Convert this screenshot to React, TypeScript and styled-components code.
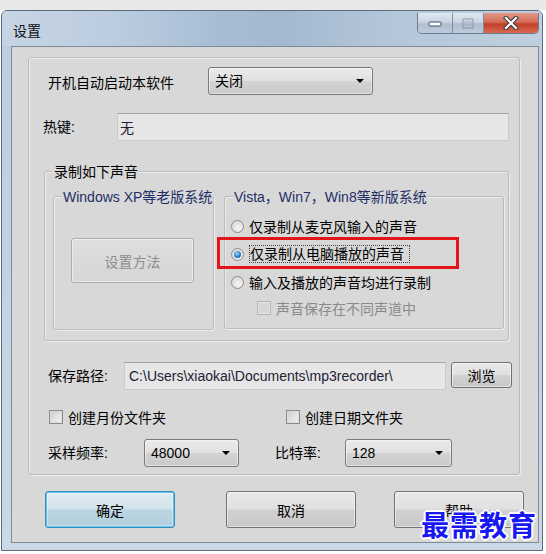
import styled, { createGlobalStyle } from "styled-components";

const GlobalStyle = createGlobalStyle`
  html, body {
    margin: 0;
    padding: 0;
    background: #fff;
  }
  body {
    font-family: "Liberation Sans", "Noto Sans CJK SC", sans-serif;
    font-size: 14px;
    color: #000;
  }
`;

const Screen = styled.div`
  position: relative;
  width: 546px;
  height: 554px;
  background: #fff;
  display: flex;
  flex-direction: column;
  overflow: hidden;
`;

const TopStrip = styled.div`
  flex: none;
  height: 10px;
  background: #e8e8e8;
`;

const Window = styled.div`
  flex: none;
  margin-left: 1px;
  width: 542px;
  height: 541px;
  box-sizing: border-box;
  border: 1px solid #5b6b7d;
  border-radius: 6px 6px 0 0;
  background: linear-gradient(180deg, #bccde0 0%, #c5d4e4 60%, #cbd8e6 100%);
  display: flex;
  flex-direction: column;
  overflow: hidden;
`;

const TitleBar = styled.div`
  flex: none;
  height: 35px;
  display: flex;
  align-items: flex-start;
  padding-left: 11px;
  background: linear-gradient(
    90deg,
    #c6d5e4 0%,
    #bccde0 20%,
    #a8bdd4 40%,
    #a4b9d0 52%,
    #b4c6d9 72%,
    #bfcfdf 100%
  );
`;

const Title = styled.span`
  margin-top: 12px;
  line-height: 16px;
  color: #111;
`;

const CaptionButtons = styled.div`
  margin-left: auto;
  margin-right: 3px;
  margin-top: 2px;
  display: flex;
  height: 20px;
  border: 1px solid #6b7a8c;
  border-top: none;
  border-radius: 0 0 5px 5px;
  overflow: hidden;
`;

const CaptionButton = styled.div<{ $w: number; $close?: boolean }>`
  width: ${(p) => p.$w}px;
  height: 20px;
  display: flex;
  align-items: center;
  justify-content: center;
  border-left: 1px solid #7f8fa2;
  box-sizing: border-box;
  background: ${(p) =>
    p.$close
      ? "linear-gradient(180deg, #e3998a 0%, #d56c56 45%, #c2402a 55%, #d66a4f 100%)"
      : "linear-gradient(180deg, #dfe7f0 0%, #c9d5e2 45%, #aebfd2 55%, #bccbdb 100%)"};
  &:first-child {
    border-left: none;
  }
`;

const Client = styled.div`
  flex: 1;
  margin: 0 3px 7px 9px;
  box-sizing: border-box;
  border: 1px solid #7f8b98;
  background: #d8d8d8;
  display: flex;
  flex-direction: column;
`;

const Panel = styled.div`
  flex: none;
  margin: 10px 0 0 16px;
  width: 492px;
  height: 418px;
  box-sizing: border-box;
  border: 1px solid #bcbcbc;
  border-radius: 3px;
  box-shadow: inset 1px 1px 0 #ececec, 1px 1px 0 #ececec;
  display: flex;
  flex-direction: column;
`;

const Row = styled.div<{ $top: number; $left: number; $h?: number }>`
  flex: none;
  display: flex;
  align-items: center;
  height: ${(p) => p.$h ?? 28}px;
  margin-top: ${(p) => p.$top}px;
  padding-left: ${(p) => p.$left}px;
`;

const Label = styled.span<{ $w: number; $dy?: number }>`
  flex: none;
  width: ${(p) => p.$w}px;
  white-space: nowrap;
  line-height: 16px;
  margin-top: ${(p) => p.$dy ?? 0}px;
`;

const Select = styled.div<{ $w: number }>`
  flex: none;
  width: ${(p) => p.$w}px;
  height: 28px;
  box-sizing: border-box;
  border: 1px solid #7a7a7a;
  border-radius: 3px;
  background: linear-gradient(180deg, #ebebeb 0%, #e1e1e1 48%, #d3d3d3 52%, #cacaca 100%);
  box-shadow: inset 0 0 0 1px rgba(255, 255, 255, 0.45);
  display: flex;
  align-items: center;
  padding: 0 8px 0 6px;
`;

const SelectValue = styled.span`
  flex: 1;
  line-height: 16px;
`;

const Arrow = styled.span`
  width: 0;
  height: 0;
  border-left: 4px solid transparent;
  border-right: 4px solid transparent;
  border-top: 4px solid #000;
`;

const TextField = styled.div<{ $w: number; $pad: number }>`
  flex: none;
  width: ${(p) => p.$w}px;
  height: 28px;
  box-sizing: border-box;
  border: 1px solid #cacaca;
  border-top-color: #a3a3a3;
  background: #e6e6e6;
  display: flex;
  align-items: center;
  padding-left: ${(p) => p.$pad}px;
  white-space: nowrap;
  color: #1d2233;
`;

const Group = styled.div<{ $w: number; $h: number; $top?: number; $left?: number }>`
  position: relative;
  flex: none;
  box-sizing: border-box;
  width: ${(p) => p.$w}px;
  height: ${(p) => p.$h}px;
  margin-top: ${(p) => p.$top ?? 0}px;
  margin-left: ${(p) => p.$left ?? 0}px;
  border: 1px solid #bcbcbc;
  border-radius: 3px;
  box-shadow: inset 1px 1px 0 #ececec, 1px 1px 0 #ececec;
`;

const GroupTitle = styled.span<{ $color?: string }>`
  position: absolute;
  top: -8px;
  left: 8px;
  padding: 0 1px;
  background: #d8d8d8;
  line-height: 16px;
  white-space: nowrap;
  color: ${(p) => p.$color ?? "#000"};
`;

const OuterBody = styled.div`
  display: flex;
  align-items: flex-start;
  gap: 10px;
  padding: 24px 0 0 8px;
`;

const LegacyBody = styled.div`
  padding: 41px 0 0 17px;
`;

const ModernBody = styled.div`
  display: flex;
  flex-direction: column;
  padding: 15px 0 0 6px;
`;

const OptionRow = styled.div<{ $h: number; $indent?: number; $disabled?: boolean }>`
  display: flex;
  align-items: center;
  gap: 5px;
  height: ${(p) => p.$h}px;
  padding-left: ${(p) => p.$indent ?? 0}px;
  white-space: nowrap;
  color: ${(p) => (p.$disabled ? "#8a8a8a" : "#000")};
`;

const Radio = styled.span<{ $checked?: boolean }>`
  flex: none;
  position: relative;
  width: 13px;
  height: 13px;
  box-sizing: border-box;
  border-radius: 50%;
  border: 1px solid #8c8c8c;
  background: radial-gradient(circle at 60% 65%, #f4f4f4 0%, #dcdcdc 70%, #cbcbcb 100%);
  &::after {
    content: "";
    display: ${(p) => (p.$checked ? "block" : "none")};
    position: absolute;
    left: 2px;
    top: 2px;
    width: 7px;
    height: 7px;
    border-radius: 50%;
    background: radial-gradient(circle at 40% 35%, #9fd9f7 0%, #2b7fc0 55%, #15457a 100%);
  }
`;

const CheckBox = styled.span<{ $disabled?: boolean }>`
  flex: none;
  width: 14px;
  height: 14px;
  box-sizing: border-box;
  border: 1px solid ${(p) => (p.$disabled ? "#b5b5b5" : "#8c8c8c")};
  background: ${(p) =>
    p.$disabled
      ? "#d6d6d6"
      : "linear-gradient(135deg, #c9c9c9 0%, #e6e6e6 60%, #f0f0f0 100%)"};
  box-shadow: inset 0 0 0 1px ${(p) => (p.$disabled ? "#e2e2e2" : "#dcdcdc")};
`;

const FocusText = styled.span`
  border: 1px dotted #444;
  padding: 0 5px 0 0;
  line-height: 16px;
`;

const Highlight = styled.div`
  position: absolute;
  left: 172px;
  top: 65px;
  width: 242px;
  height: 32px;
  box-sizing: border-box;
  border: 3px solid #e3151a;
  pointer-events: none;
`;

const Button = styled.div<{ $w: number; $h: number; $primary?: boolean; $disabled?: boolean; $left?: number }>`
  flex: none;
  width: ${(p) => p.$w}px;
  height: ${(p) => p.$h}px;
  margin-left: ${(p) => p.$left ?? 0}px;
  box-sizing: border-box;
  border-radius: 3px;
  display: flex;
  align-items: center;
  justify-content: center;
  border: 1px solid ${(p) => (p.$primary ? "#3d8bb8" : p.$disabled ? "#adadad" : "#707070")};
  color: ${(p) => (p.$disabled ? "#8d8d8d" : "#000")};
  background: ${(p) =>
    p.$primary
      ? "linear-gradient(180deg, #e1ebf1 0%, #d3e2ea 48%, #bcd5e2 52%, #b2cfdd 100%)"
      : p.$disabled
      ? "linear-gradient(180deg, #dedede 0%, #d6d6d6 100%)"
      : "linear-gradient(180deg, #e9e9e9 0%, #e0e0e0 48%, #d1d1d1 52%, #c8c8c8 100%)"};
  box-shadow: ${(p) =>
    p.$primary
      ? "inset 0 0 0 1px #58c6ee, inset 0 0 0 2px rgba(255,255,255,0.35)"
      : "inset 0 0 0 1px rgba(255,255,255,0.5)"};
`;

const ButtonBar = styled.div`
  flex: none;
  display: flex;
  height: 37px;
  margin-top: 16px;
  padding-left: 33px;
`;

const Watermark = styled.div`
  position: absolute;
  left: 421px;
  top: 507px;
  font-family: "Noto Sans CJK SC", sans-serif;
  font-size: 28px;
  font-weight: 700;
  line-height: 34px;
  letter-spacing: 1px;
  color: #1818f0;
  text-shadow: -2px 0 0 #fff, 2px 0 0 #fff, 0 -2px 0 #fff, 0 2px 0 #fff,
    -1px -1px 0 #fff, 1px 1px 0 #fff, -1px 1px 0 #fff, 1px -1px 0 #fff;
`;

const MinIcon = () => (
  <svg width="14" height="8" viewBox="0 0 14 8">
    <rect x="1" y="3" width="12" height="4" rx="1" fill="#fff" stroke="#3e4d5e" />
  </svg>
);

const MaxIcon = () => (
  <svg width="12" height="11" viewBox="0 0 12 11">
    <rect x="1" y="1" width="10" height="9" fill="none" stroke="#8797aa" />
    <rect x="3" y="4" width="6" height="3" fill="none" stroke="#a3b1c1" />
  </svg>
);

const CloseIcon = () => (
  <svg width="16" height="14" viewBox="0 0 16 14">
    <path d="M3 2 L13 12 M13 2 L3 12" stroke="#3b3b3b" strokeWidth="4.4" strokeLinecap="square" />
    <path d="M3 2 L13 12 M13 2 L3 12" stroke="#fff" strokeWidth="2.2" strokeLinecap="square" />
  </svg>
);

const App = () => {
  return (
    <Screen>
      <GlobalStyle />
      <TopStrip />
      <Window>
        <TitleBar>
          <Title>设置</Title>
          <CaptionButtons>
            <CaptionButton $w={34}>
              <MinIcon />
            </CaptionButton>
            <CaptionButton $w={31}>
              <MaxIcon />
            </CaptionButton>
            <CaptionButton $w={55} $close>
              <CloseIcon />
            </CaptionButton>
          </CaptionButtons>
        </TitleBar>
        <Client>
          <Panel>
            <Row $top={9} $left={19}>
              <Label $w={160} $dy={4}>
                开机自动启动本软件
              </Label>
              <Select $w={165}>
                <SelectValue>关闭</SelectValue>
                <Arrow />
              </Select>
            </Row>
            <Row $top={18} $left={14}>
              <Label $w={74}>热键:</Label>
              <TextField $w={392} $pad={2}>
                无
              </TextField>
            </Row>
            <Group $w={465} $h={170} $top={30} $left={15}>
              <GroupTitle>录制如下声音</GroupTitle>
              <OuterBody>
                <Group $w={161} $h={134}>
                  <GroupTitle $color="#1f2f66">Windows XP等老版系统</GroupTitle>
                  <LegacyBody>
                    <Button $w={123} $h={45} $disabled>
                      设置方法
                    </Button>
                  </LegacyBody>
                </Group>
                <Group $w={280} $h={133}>
                  <GroupTitle $color="#1f2f66">Vista，Win7，Win8等新版系统</GroupTitle>
                  <ModernBody>
                    <OptionRow $h={28}>
                      <Radio />
                      仅录制从麦克风输入的声音
                    </OptionRow>
                    <OptionRow $h={28}>
                      <Radio $checked />
                      <FocusText>仅录制从电脑播放的声音</FocusText>
                    </OptionRow>
                    <OptionRow $h={28}>
                      <Radio />
                      输入及播放的声音均进行录制
                    </OptionRow>
                    <OptionRow $h={24} $indent={26} $disabled>
                      <CheckBox $disabled />
                      声音保存在不同声道中
                    </OptionRow>
                  </ModernBody>
                </Group>
              </OuterBody>
              <Highlight />
            </Group>
            <Row $top={21} $left={19}>
              <Label $w={76}>保存路径:</Label>
              <TextField $w={322} $pad={4}>
                C:\Users\xiaokai\Documents\mp3recorder\
              </TextField>
              <Button $w={61} $h={26} $left={5} style={{ alignSelf: "flex-start" }}>
                浏览
              </Button>
            </Row>
            <Row $top={13} $left={20}>
              <OptionRow $h={28} style={{ width: 237 }}>
                <CheckBox />
                创建月份文件夹
              </OptionRow>
              <OptionRow $h={28}>
                <CheckBox />
                创建日期文件夹
              </OptionRow>
            </Row>
            <Row $top={8} $left={19}>
              <Label $w={96}>采样频率:</Label>
              <Select $w={95}>
                <SelectValue>48000</SelectValue>
                <Arrow />
              </Select>
              <Label $w={70} style={{ marginLeft: 36 }}>
                比特率:
              </Label>
              <Select $w={107}>
                <SelectValue>128</SelectValue>
                <Arrow />
              </Select>
            </Row>
          </Panel>
          <ButtonBar>
            <Button $w={130} $h={37} $primary>
              确定
            </Button>
            <Button $w={130} $h={37} $left={51}>
              取消
            </Button>
            <Button $w={130} $h={37} $left={38}>
              帮助
            </Button>
          </ButtonBar>
        </Client>
      </Window>
      <Watermark>最需教育</Watermark>
    </Screen>
  );
};

export default App;
